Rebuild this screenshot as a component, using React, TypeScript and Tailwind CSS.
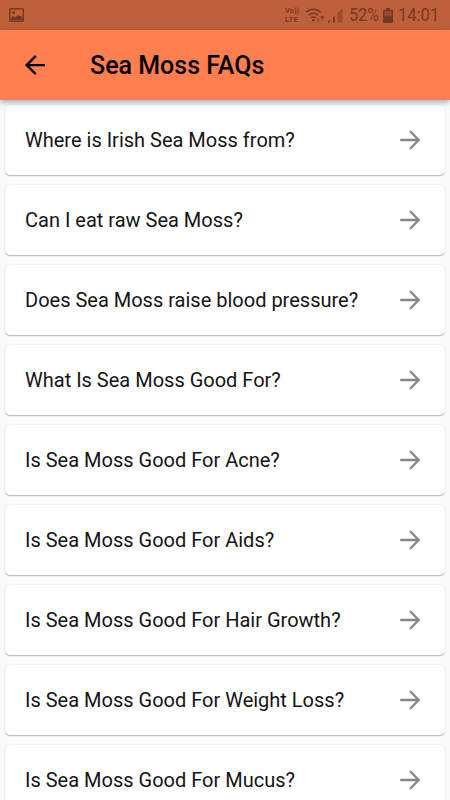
/**
 * App.tsx — Sea Moss FAQs list screen.
 *
 * Sections:
 *  1. StatusBar — phone status icons, tinted over the app bar colour
 *  2. AppBar    — back button + title
 *  3. FAQ list  — one card per question
 */

import React from 'react';

// ─── Data ─────────────────────────────────────────────────────────

const QUESTIONS = [
  'Where is Irish Sea Moss from?',
  'Can I eat raw Sea Moss?',
  'Does Sea Moss raise blood pressure?',
  'What Is Sea Moss Good For?',
  'Is Sea Moss Good For Acne?',
  'Is Sea Moss Good For Aids?',
  'Is Sea Moss Good For Hair Growth?',
  'Is Sea Moss Good For Weight Loss?',
  'Is Sea Moss Good For Mucus?',
];

// ─── Status bar ───────────────────────────────────────────────────

const StatusBar: React.FC = () => (
  <div className="flex h-[30px] shrink-0 items-center justify-between bg-[#bf603c] pr-[11px] pl-[9px] text-[#74391f]">
    <svg className="h-[14px] w-[15px]" viewBox="0 0 15 14" aria-hidden="true">
      <rect x="0.75" y="0.75" width="13.5" height="12.5" rx="0.8" fill="none" stroke="currentColor" strokeWidth="1.5" />
      <circle cx="4.4" cy="4.5" r="1.4" fill="currentColor" />
      <path d="M2 12V9.700l2.300-1.700 1.700 1.200L9.300 7l1.500 1.200 1.200-.7 1.200 1.500V12z" fill="currentColor" />
    </svg>

    <div className="flex items-center">
      <div className="flex w-[15px] flex-col gap-px text-[7.5px] leading-[8px] font-bold">
        <span className="whitespace-nowrap">Vo))</span>
        <span className="tracking-[0.3px]">LTE</span>
      </div>

      {/* Wi-Fi with traffic arrows */}
      <svg className="ml-[5px] h-4 w-[20px]" viewBox="0 0 20 16" fill="none" stroke="currentColor" aria-hidden="true">
        <path d="M1 5.200a10.500 10.500 0 0 1 14.600 0M3.500 8.200a7 7 0 0 1 9.600 0M5.800 11a3.800 3.800 0 0 1 5 0" strokeWidth="1.5" />
        <circle cx="8.3" cy="13.300" r="1.3" fill="currentColor" stroke="none" />
        <path d="M13.300 10.500v4M11.900 13l1.400 1.500 1.400-1.500" strokeWidth="1" opacity="0.5" />
        <path d="M17.200 13.500v-4M15.600 10.900l1.600-1.600 1.600 1.600" strokeWidth="1.1" />
      </svg>

      {/* Signal strength */}
      <svg className="ml-[3px] h-[15px] w-[15px]" viewBox="0 0 15 15" fill="currentColor" aria-hidden="true">
        <path d="M0 14.500v-1.200l2-1.500v2.700zM5 14.500V9.500l1.800-1.500v6.500z" />
        <path d="M9.500 14.500V4.500l5-3.500v13.500z" opacity="0.5" />
      </svg>

      <span className="ml-[6px] w-[30px] origin-left scale-x-[0.9] text-[18px] leading-none whitespace-nowrap">52%</span>

      <svg className="ml-1 h-[15px] w-[10px]" viewBox="0 0 10 15" fill="currentColor" aria-hidden="true">
        <path d="M3 0h4v1.700h2q1 0 1 1V14q0 1-1 1H1q-1 0-1-1V2.700q0-1 1-1h2z" />
        <path d="M1.300 3.200h7.400v5H1.300z" fill="#9a4b2b" />
      </svg>

      <span className="ml-[5px] w-[41px] origin-left scale-x-[0.92] text-[18px] leading-none whitespace-nowrap">14:01</span>
    </div>
  </div>
);

// ─── App bar ──────────────────────────────────────────────────────

const AppBar: React.FC = () => (
  <header className="relative z-10 flex h-[70px] shrink-0 items-center bg-[#ff7f50] pl-5 text-black shadow-[0_2px_6px_rgba(0,0,0,0.35)]">
    <button type="button" aria-label="Back">
      <svg className="block size-[30px]" viewBox="0 0 24 24" fill="currentColor" aria-hidden="true">
        <path d="M20 11.100H7.600l5.700-5.700L12 4l-8 8 8 8 1.300-1.400L7.600 12.900H20z" />
      </svg>
    </button>
    <h1 className="ml-10 text-[25px] leading-none font-medium">Sea Moss FAQs</h1>
  </header>
);

// ─── FAQ card ─────────────────────────────────────────────────────

const FaqCard: React.FC<{ question: string }> = ({ question }) => (
  <li className="flex h-[70px] shrink-0 items-center justify-between rounded-[5px] bg-white px-5 shadow-[0_1px_1px_rgba(0,0,0,0.24),0_0_2px_rgba(0,0,0,0.1)]">
    <span className="text-[20px] leading-none text-[#141414]">{question}</span>
    <svg className="size-[30px] text-[#858585]" viewBox="0 0 24 24" fill="none" stroke="currentColor" strokeWidth="1.9" strokeLinecap="round" aria-hidden="true">
      <path d="M5 12h13.600M12.500 5.400l6.400 6.600-6.400 6.600" />
    </svg>
  </li>
);

// ─── Page ─────────────────────────────────────────────────────────

const App: React.FC = () => (
  <div className="flex h-[800px] w-[450px] flex-col overflow-hidden bg-[#fafafa] font-[Roboto,sans-serif]">
    <StatusBar />
    <AppBar />
    <ul className="flex min-h-0 flex-1 flex-col gap-[10px] overflow-hidden p-[5px]">
      {QUESTIONS.map((question) => (
        <FaqCard key={question} question={question} />
      ))}
    </ul>
  </div>
);

export default App;
